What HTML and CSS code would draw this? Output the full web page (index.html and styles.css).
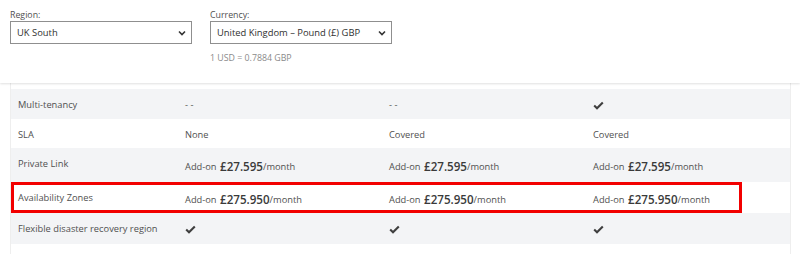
FILE: index.html
```html
<!DOCTYPE html>
<html lang="en">
<head>
<meta charset="utf-8">
<title>Pricing</title>
<link rel="stylesheet" href="styles.css">
</head>
<body>
<div class="filters">
  <div class="field region">
    <div class="label">Region:</div>
    <div class="select"><span>UK South</span><svg class="chev" width="8" height="6" viewBox="0 0 8 6"><path d="M1 1.5 L4 4.5 L7 1.5" fill="none" stroke="#333" stroke-width="1.6"/></svg></div>
  </div>
  <div class="field currency">
    <div class="label">Currency:</div>
    <div class="select"><span>United Kingdom – Pound (£) GBP</span><svg class="chev" width="8" height="6" viewBox="0 0 8 6"><path d="M1 1.5 L4 4.5 L7 1.5" fill="none" stroke="#333" stroke-width="1.6"/></svg></div>
    <div class="rate">1 USD = 0.7884 GBP</div>
  </div>
</div>
<div class="table">
  <div class="row alt r1">
    <div class="name">Multi-tenancy</div>
    <div class="val">- -</div>
    <div class="val">- -</div>
    <div class="val"><svg class="check" width="11" height="9" viewBox="0 0 11 9"><path d="M1.2 4.6 L4 7.3 L9.8 1.5" fill="none" stroke="#3f3f3f" stroke-width="2.1"/></svg></div>
  </div>
  <div class="row r2">
    <div class="name">SLA</div>
    <div class="val">None</div>
    <div class="val">Covered</div>
    <div class="val">Covered</div>
  </div>
  <div class="row alt r3 priced">
    <div class="name">Private Link</div>
    <div class="val">Add-on <b>£27.595</b>/month</div>
    <div class="val">Add-on <b>£27.595</b>/month</div>
    <div class="val">Add-on <b>£27.595</b>/month</div>
  </div>
  <div class="row r4 priced">
    <div class="name">Availability Zones</div>
    <div class="val">Add-on <b>£275.950</b>/month</div>
    <div class="val">Add-on <b>£275.950</b>/month</div>
    <div class="val">Add-on <b>£275.950</b>/month</div>
    <div class="annot"></div>
  </div>
  <div class="row alt r5">
    <div class="name">Flexible disaster recovery region</div>
    <div class="val"><svg class="check" width="11" height="9" viewBox="0 0 11 9"><path d="M1.2 4.6 L4 7.3 L9.8 1.5" fill="none" stroke="#3f3f3f" stroke-width="2.1"/></svg></div>
    <div class="val"><svg class="check" width="11" height="9" viewBox="0 0 11 9"><path d="M1.2 4.6 L4 7.3 L9.8 1.5" fill="none" stroke="#3f3f3f" stroke-width="2.1"/></svg></div>
    <div class="val"><svg class="check" width="11" height="9" viewBox="0 0 11 9"><path d="M1.2 4.6 L4 7.3 L9.8 1.5" fill="none" stroke="#3f3f3f" stroke-width="2.1"/></svg></div>
  </div>
</div>
</body>
</html>
```
FILE: styles.css
```css
html, body {
  margin: 0;
  padding: 0;
  background: #fff;
}
body {
  font-family: "Open Sans", "Noto Sans", sans-serif;
  color: #505050;
}
.filters {
  box-sizing: border-box;
  height: 83px;
  padding: 9px 10px 0;
  display: flex;
  gap: 18px;
  background: #fff;
  box-shadow: 0 1px 2px rgba(0, 0, 0, 0.12);
  position: relative;
  z-index: 1;
}
.field.region { width: 182px; }
.field.currency { width: 182px; }
.label {
  font-size: 8.8px;
  line-height: 12px;
  color: #505050;
}
.select {
  box-sizing: border-box;
  height: 23px;
  border: 1px solid #8f8f8f;
  display: flex;
  align-items: center;
  justify-content: space-between;
  padding: 0 5px 0 6px;
  font-size: 9.4px;
  color: #303030;
}
.chev { display: block; }
.rate {
  margin-top: 8px;
  font-size: 8.8px;
  line-height: 12px;
  color: #8a8a8a;
}
.table {
  box-sizing: border-box;
  margin: 0 9px 0 10px;
  border-left: 1px solid #eeeeee;
  border-right: 1px solid #eeeeee;
  padding-top: 6px;
  height: 171px;
}
.row {
  display: grid;
  grid-template-columns: 167px 204px 204px 204px;
  position: relative;
  font-size: 9.3px;
}
.row.alt { background: #f3f4f6; }
.r1 { height: 30px; }
.r2 { height: 29px; }
.r3 { height: 34px; }
.r4 { height: 31px; }
.r5 { height: 31px; }
.name {
  padding: 9px 7px 0;
  line-height: 14px;
  color: #505050;
}
.val {
  padding: 2px 7px 0;
  align-self: center;
  line-height: 18px;
  color: #505050;
  display: flex;
  align-items: center;
}
.priced .val { padding-top: 4px; }
.val b {
  font-size: 11.6px;
  font-weight: 600;
  color: #3a3a3a;
  margin-left: 0.3em;
}
.check { display: block; }
.annot {
  position: absolute;
  left: 0;
  top: 0;
  width: 731px;
  height: 31px;
  box-sizing: border-box;
  border: 3px solid #f20000;
  pointer-events: none;
}
```
